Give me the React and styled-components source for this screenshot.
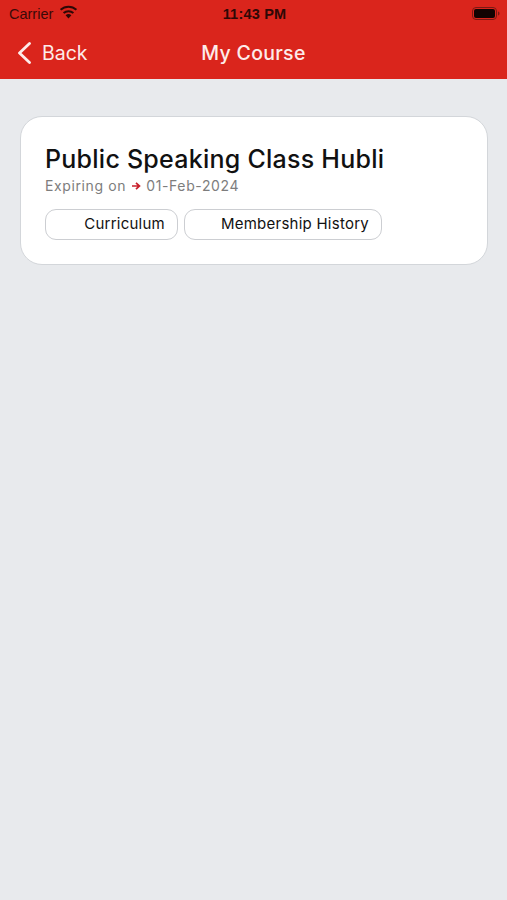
import React from "react";
import styled, { createGlobalStyle } from "styled-components";

const GlobalStyle = createGlobalStyle`
  html, body {
    margin: 0;
    padding: 0;
    background: #e8eaed;
  }
  * {
    box-sizing: border-box;
  }
`;

const Screen = styled.div`
  width: 507px;
  height: 900px;
  overflow: hidden;
  background: #e8eaed;
  font-family: Inter, "Liberation Sans", sans-serif;
`;

const Header = styled.header`
  height: 79px;
  background: #da251c;
  display: flex;
  flex-direction: column;
`;

const StatusBar = styled.div`
  height: 27px;
  padding: 0 7px 0 9px;
  display: grid;
  grid-template-columns: 1fr auto 1fr;
  align-items: center;
  color: #3a0a08;
  font-family: "Liberation Sans", sans-serif;
  font-size: 14.5px;
`;

const Carrier = styled.div`
  display: flex;
  align-items: center;
  gap: 6px;
`;

const WifiIcon = styled.svg`
  margin-bottom: 3px;
`;

const Clock = styled.div`
  font-weight: 700;
  color: #2e0806;
  letter-spacing: 0.2px;
`;

const BatteryWrap = styled.div`
  display: flex;
  justify-content: flex-end;
`;

const NavBar = styled.nav`
  flex: 1;
  padding: 0 17px 1px 17px;
  display: grid;
  grid-template-columns: 1fr auto 1fr;
  align-items: center;
  color: #fdecea;
  font-size: 19.5px;
`;

const BackLink = styled.div`
  display: flex;
  align-items: center;
  gap: 11px;
`;

const Title = styled.div`
  font-weight: 500;
  letter-spacing: 0.3px;
`;

const Content = styled.main`
  padding: 37px 19px 0 20px;
`;

const Card = styled.section`
  height: 149px;
  padding: 27px 24px 0;
  background: #fff;
  border: 1px solid #d3d6da;
  border-radius: 22px;
`;

const CourseName = styled.h2`
  margin: 0;
  font-size: 25px;
  line-height: 30px;
  font-weight: 500;
  color: #111;
  letter-spacing: 0.25px;
`;

const Expiry = styled.div`
  margin-top: 3px;
  display: flex;
  align-items: center;
  gap: 5px;
  font-size: 14px;
  line-height: 18px;
  color: #7d7d7d;
  letter-spacing: 0.62px;
`;

const Actions = styled.div`
  margin-top: 14px;
  display: flex;
  gap: 6px;
`;

const Pill = styled.button`
  width: ${(p) => p.$width}px;
  height: 31px;
  padding: 0 12px 2px 0;
  display: flex;
  align-items: center;
  justify-content: flex-end;
  background: #fff;
  border: 1px solid #ccced2;
  border-radius: 11px;
  font-family: inherit;
  font-size: 15px;
  font-weight: 400;
  color: #111;
  letter-spacing: 0.25px;
`;

function Wifi() {
  return (
    <WifiIcon width="19" height="14" viewBox="0 0 19 14">
      <path d="M9.5 13.5 6.6 10.3a4.2 4.2 0 0 1 5.8 0Z" fill="#2e0806" />
      <path d="M4.6 8.1a7.2 7.2 0 0 1 9.8 0" fill="none" stroke="#2e0806" strokeWidth="2" />
      <path d="M1.6 4.8a11.6 11.6 0 0 1 15.8 0" fill="none" stroke="#2e0806" strokeWidth="2" />
    </WifiIcon>
  );
}

function Battery() {
  return (
    <svg width="28" height="13" viewBox="0 0 28 13">
      <rect x="0.5" y="0.5" width="24" height="12" rx="3.5" fill="none" stroke="#7a1a14" />
      <rect x="2" y="2" width="21" height="9" rx="2" fill="#120302" />
      <path d="M26 4.5c1 .3 1.5 1 1.5 2s-.5 1.700-1.500 2Z" fill="#7a1a14" />
    </svg>
  );
}

function Chevron() {
  return (
    <svg width="14" height="24" viewBox="0 0 14 24">
      <path d="M12.5 2.500 2.500 12l10 9.500" fill="none" stroke="#fdecea" strokeWidth="2.800" strokeLinecap="round" strokeLinejoin="round" />
    </svg>
  );
}

function RedArrow() {
  return (
    <svg width="10" height="10" viewBox="0 0 10 10">
      <path d="M1 5h7M5 1.800 8.500 5 5 8.200" fill="none" stroke="#c8202c" strokeWidth="1.700" />
    </svg>
  );
}

export default function App() {
  return (
    <Screen>
      <GlobalStyle />
      <Header>
        <StatusBar>
          <Carrier>
            Carrier
            <Wifi />
          </Carrier>
          <Clock>11:43 PM</Clock>
          <BatteryWrap>
            <Battery />
          </BatteryWrap>
        </StatusBar>
        <NavBar>
          <BackLink>
            <Chevron />
            Back
          </BackLink>
          <Title>My Course</Title>
        </NavBar>
      </Header>
      <Content>
        <Card>
          <CourseName>Public Speaking Class Hubli</CourseName>
          <Expiry>
            Expiring on <RedArrow /> 01-Feb-2024
          </Expiry>
          <Actions>
            <Pill $width={133}>Curriculum</Pill>
            <Pill $width={198}>Membership History</Pill>
          </Actions>
        </Card>
      </Content>
    </Screen>
  );
}
